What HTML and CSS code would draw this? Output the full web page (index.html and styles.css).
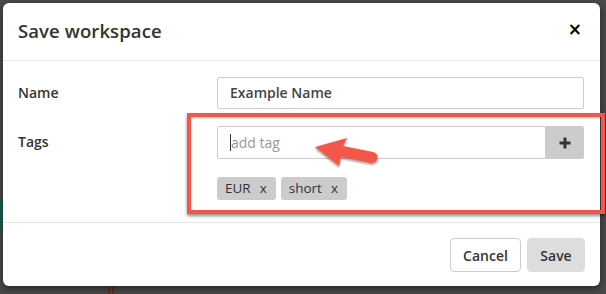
FILE: index.html
```html
<!DOCTYPE html>
<html>
<head>
<meta charset="utf-8">
<link rel="stylesheet" href="styles.css">
</head>
<body>
<div class="backdrop">
  <div class="bg-teal"></div>
  <div class="bg-line"></div>
  <div class="modal">
    <div class="modal-header">
      <h4 class="modal-title">Save workspace</h4>
      <span class="close">&times;</span>
    </div>
    <div class="modal-body">
      <div class="row">
        <label class="label">Name</label>
        <div class="field">
          <div class="input name-input">Example Name</div>
        </div>
      </div>
      <div class="row tags-row">
        <label class="label">Tags</label>
        <div class="field">
          <div class="input-group">
            <div class="input tag-input"><span class="caret"></span><span class="placeholder">add tag</span></div>
            <button class="add-btn"><svg width="14" height="14" viewBox="0 0 14 14"><path d="M7 1.5v11M1.5 7h11" stroke="#333" stroke-width="3" fill="none"/></svg></button>
          </div>
          <div class="chips">
            <span class="chip">EUR<span class="x">x</span></span>
            <span class="chip">short<span class="x">x</span></span>
          </div>
        </div>
      </div>
    </div>
    <div class="modal-footer">
      <button class="btn btn-default">Cancel</button>
      <button class="btn btn-save">Save</button>
    </div>
  </div>
  <div class="highlight"></div>
  <svg class="arrow" width="80" height="48" viewBox="0 0 80 48">
    <defs>
      <filter id="sh" x="-20%" y="-20%" width="140%" height="160%">
        <feDropShadow dx="0" dy="1.5" stdDeviation="1.2" flood-color="#000" flood-opacity="0.45"/>
      </filter>
    </defs>
    <g filter="url(#sh)" fill="#f4574a">
      <path d="M5 22 L37 13 L33 21 L63 27 A5.5 5.5 0 0 1 61 38 L31 32 L29 41 Z"/>
    </g>
  </svg>
</div>
</body>
</html>
```

FILE: styles.css
```css
* { box-sizing: border-box; }
html, body { margin: 0; padding: 0; }
body {
  width: 606px;
  height: 294px;
  overflow: hidden;
  background: #4a4a4a;
  font-family: "Open Sans", "Liberation Sans", sans-serif;
  color: #333;
}
.backdrop {
  position: relative;
  width: 606px;
  height: 294px;
  padding: 3px 6px 8px 3px;
}
.bg-teal {
  position: absolute;
  left: 0;
  top: 200px;
  width: 4px;
  height: 30px;
  background: #1f5f52;
}
.bg-line {
  position: absolute;
  left: 108px;
  top: 285px;
  width: 6px;
  height: 9px;
  border-left: 2px solid #6a2a24;
  border-right: 2px solid #6a2a24;
}
.modal {
  position: relative;
  width: 597px;
  height: 283px;
  background: #fff;
  border-radius: 6px;
  box-shadow: 0 3px 9px rgba(0,0,0,0.5);
  display: flex;
  flex-direction: column;
}
.modal-header {
  height: 58px;
  border-bottom: 1px solid #e5e5e5;
  display: flex;
  align-items: center;
  justify-content: space-between;
  padding: 0 18px 2px 15px;
}
.modal-title {
  margin: 0;
  font-size: 18.5px;
  font-weight: 600;
  color: #333;
  letter-spacing: 0.1px;
}
.close {
  font-family: "DejaVu Sans", sans-serif;
  font-size: 17px;
  font-weight: bold;
  color: #000;
  line-height: 1;
  margin-top: -3px;
}
.modal-body {
  flex: 1;
  padding: 16px 16px 0 15px;
  display: flex;
  flex-direction: column;
  gap: 17px;
}
.row {
  display: flex;
  align-items: flex-start;
}
.label {
  width: 199px;
  font-size: 14px;
  font-weight: 600;
  line-height: 32px;
  color: #333;
}
.field {
  flex: 1;
}
.input {
  height: 32px;
  border: 1px solid #ccc;
  border-radius: 2px;
  font-size: 14px;
  line-height: 30px;
  padding: 0 12px;
}
.name-input {
  font-weight: 600;
  color: #444;
}
.input-group {
  display: flex;
  height: 33px;
}
.tag-input {
  flex: 1;
  height: 33px;
  border-radius: 2px 0 0 2px;
  display: flex;
  align-items: center;
}
.caret {
  display: inline-block;
  width: 1px;
  height: 17px;
  background: #333;
}
.placeholder {
  color: #999;
}
.add-btn {
  width: 38px;
  height: 33px;
  border: none;
  background: #ccc;
  border-radius: 0 2px 2px 0;
  display: flex;
  align-items: center;
  justify-content: center;
  padding: 0;
}
.chips {
  display: flex;
  gap: 5px;
  margin-top: 18px;
}
.chip {
  background: #ccc;
  border-radius: 3px;
  height: 23px;
  font-size: 13.5px;
  line-height: 23px;
  padding: 0 9px 0 8px;
  color: #333;
}
.chip .x {
  margin-left: 9px;
}
.modal-footer {
  height: 64px;
  border-top: 1px solid #e5e5e5;
  display: flex;
  justify-content: flex-end;
  align-items: flex-start;
  gap: 6px;
  padding: 15px 15px 0 0;
}
.btn {
  height: 34px;
  font-family: "Open Sans", "Liberation Sans", sans-serif;
  font-size: 14px;
  font-weight: 600;
  color: #333;
  border-radius: 4px;
  padding: 0 10px;
}
.btn-default {
  background: #fff;
  border: 1px solid #ccc;
  width: 71px;
}
.btn-save {
  background: #ddd;
  border: 1px solid #ddd;
  width: 58px;
}
.highlight {
  position: absolute;
  left: 187px;
  top: 113px;
  width: 418px;
  height: 101px;
  border: 4px solid #f4574a;
  box-shadow: 0 2px 3px rgba(0,0,0,0.45), inset 0 1px 2px rgba(0,0,0,0.25);
}
.arrow {
  position: absolute;
  left: 310px;
  top: 125px;
}
```
